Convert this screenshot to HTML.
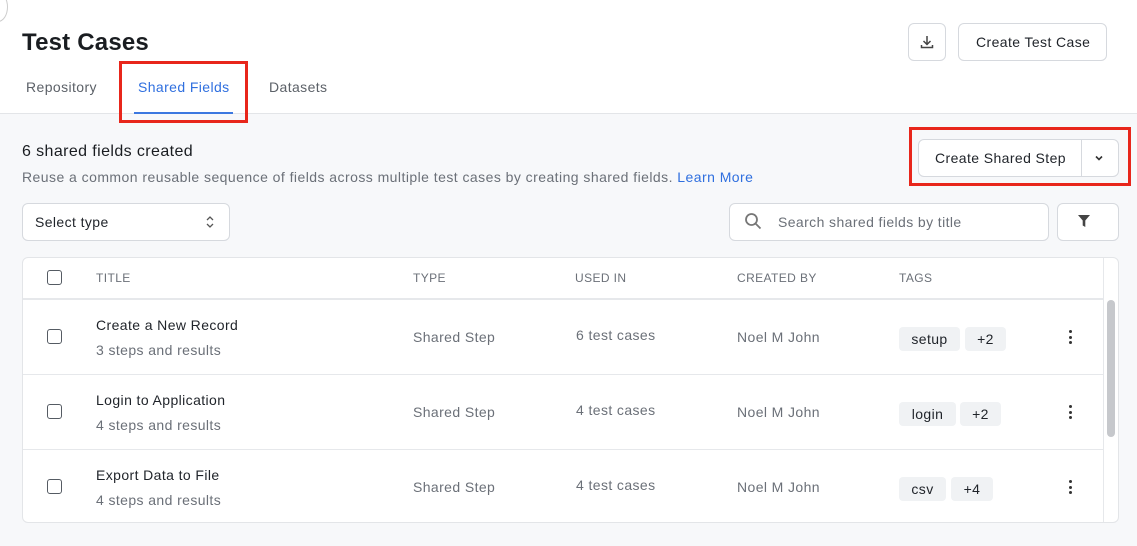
<!DOCTYPE html>
<html><head><meta charset="utf-8"><style>
*{box-sizing:border-box;margin:0;padding:0}
body{width:1137px;height:546px;overflow:hidden;font-family:"Liberation Sans",sans-serif;background:#f7f8fa;position:relative;color:#1f2329;letter-spacing:0.4px}
.a{position:absolute;white-space:nowrap}
.top{position:absolute;left:0;top:0;width:1137px;height:114px;background:#fff;border-bottom:1px solid #e3e5e8}
.btn{position:absolute;background:#fff;border:1px solid #d6d9de;border-radius:6px}
.red{position:absolute;border:3px solid #e8261b}
.cb{position:absolute;width:15px;height:15px;border:1.5px solid #555b63;border-radius:3px;background:#fff}
.h{font-size:12px;color:#6b7078;top:271px}
.t1{font-size:14px;color:#1f2329}
.t2{font-size:14px;color:#6b7078}
.g{font-size:14px;color:#6b7078}
.tag{position:absolute;background:#f0f2f4;border-radius:4px;height:24px;font-size:14px;color:#1f2329;line-height:24px;text-align:center}
.dots{position:absolute;width:3px}
.dots i{display:block;width:3px;height:3px;background:#333;border-radius:50%;margin-bottom:2.5px}
.row{position:absolute;left:23px;width:1080px;height:1px;background:#e6e8eb}
</style></head><body>
<div class="top"></div>
<div class="a" style="left:-12px;top:-8px;width:20px;height:30px;border:1px solid #ccc;border-radius:50%;background:#fff"></div>
<div class="a" style="left:22px;top:29px;font-size:24px;font-weight:bold;color:#1a1d21;letter-spacing:0.2px">Test Cases</div>
<div class="a" style="left:26px;top:79px;font-size:14px;color:#5c6168">Repository</div>
<div class="a" style="left:138px;top:79px;font-size:14px;color:#2f6fdf">Shared Fields</div>
<div class="a" style="left:134px;top:112px;width:99px;height:2px;background:#3c78e0"></div>
<div class="a" style="left:269px;top:79px;font-size:14px;color:#5c6168">Datasets</div>
<div class="red" style="left:119px;top:61px;width:129px;height:62px"></div>
<div class="btn" style="left:908px;top:23px;width:38px;height:38px"></div>
<svg class="a" style="left:919px;top:34px" width="16" height="16" viewBox="0 0 16 16" fill="none" stroke="#444" stroke-width="1.5"><path d="M8 2v8M4.5 7l3.5 3.5L11.5 7M2.5 11v2.5h11V11"/></svg>
<div class="btn" style="left:958px;top:23px;width:149px;height:38px"></div>
<div class="a" style="left:976px;top:34px;font-size:14px;color:#1f2329">Create Test Case</div>
<div class="a" style="left:22px;top:143px;font-size:16px;color:#1a1d21">6 shared fields created</div>
<div class="a" style="left:22px;top:169px;font-size:14px;color:#6b7078;letter-spacing:0.45px">Reuse a common reusable sequence of fields across multiple test cases by creating shared fields. <span style="color:#2f6fdf">Learn More</span></div>
<div class="btn" style="left:918px;top:139px;width:201px;height:38px"></div>
<div class="a" style="left:1081px;top:140px;width:1px;height:36px;background:#d6d9de"></div>
<div class="a" style="left:935px;top:150px;font-size:14px;color:#1f2329">Create Shared Step</div>
<svg class="a" style="left:1093px;top:152px" width="12" height="12" viewBox="0 0 12 12" fill="none" stroke="#333" stroke-width="1.6"><path d="M3 4.5l3 3 3-3"/></svg>
<div class="red" style="left:909px;top:127px;width:222px;height:59px"></div>
<div class="btn" style="left:22px;top:203px;width:208px;height:38px"></div>
<div class="a" style="left:35px;top:214px;font-size:14px;color:#1f2329">Select type</div>
<svg class="a" style="left:205px;top:213px" width="10" height="18" viewBox="0 0 10 18" fill="none" stroke="#555" stroke-width="1.3"><path d="M2 7l3-3 3 3M2 11l3 3 3-3"/></svg>
<div class="btn" style="left:729px;top:203px;width:320px;height:38px"></div>
<svg class="a" style="left:744px;top:212px" width="18" height="18" viewBox="0 0 18 18" fill="none" stroke="#777" stroke-width="1.8"><circle cx="7.5" cy="7.5" r="5.5"/><path d="M11.5 11.5l5 5"/></svg>
<div class="a" style="left:778px;top:214px;font-size:14px;color:#6b7078">Search shared fields by title</div>
<div class="btn" style="left:1057px;top:203px;width:62px;height:38px"></div>
<svg class="a" style="left:1077px;top:214px" width="14" height="14" viewBox="0 0 14 14"><path d="M1 1h12L8.3 6.5V13L5.7 11.5V6.5z" fill="#444"/></svg>
<div class="a" style="left:22px;top:257px;width:1097px;height:266px;background:#fff;border:1px solid #e3e5e8;border-radius:6px"></div>
<div class="a" style="left:1103px;top:258px;width:1px;height:264px;background:#e6e8eb"></div>
<div class="a" style="left:1107px;top:300px;width:8px;height:137px;background:#c6c8cc;border-radius:4px"></div>
<div class="a" style="left:23px;top:298px;width:1080px;height:2px;background:#e6e8eb"></div>
<div class="row" style="top:374px"></div>
<div class="row" style="top:449px"></div>
<div class="cb" style="left:47px;top:270px"></div>
<div class="a h" style="left:96px">TITLE</div>
<div class="a h" style="left:413px">TYPE</div>
<div class="a h" style="left:575px">USED IN</div>
<div class="a h" style="left:737px">CREATED BY</div>
<div class="a h" style="left:899px">TAGS</div>

<div class="cb" style="left:47px;top:329px"></div>
<div class="a t1" style="left:96px;top:317px">Create a New Record</div>
<div class="a t2" style="left:96px;top:342px">3 steps and results</div>
<div class="a g" style="left:413px;top:329px">Shared Step</div>
<div class="a g" style="left:576px;top:327px">6 test cases</div>
<div class="a g" style="left:737px;top:329px">Noel M John</div>
<div class="tag" style="left:899px;top:327px;width:61px">setup</div>
<div class="tag" style="left:965px;top:327px;width:41px">+2</div>
<div class="dots" style="left:1069px;top:330px"><i></i><i></i><i></i></div>

<div class="cb" style="left:47px;top:404px"></div>
<div class="a t1" style="left:96px;top:392px">Login to Application</div>
<div class="a t2" style="left:96px;top:417px">4 steps and results</div>
<div class="a g" style="left:413px;top:404px">Shared Step</div>
<div class="a g" style="left:576px;top:402px">4 test cases</div>
<div class="a g" style="left:737px;top:404px">Noel M John</div>
<div class="tag" style="left:899px;top:402px;width:57px">login</div>
<div class="tag" style="left:960px;top:402px;width:41px">+2</div>
<div class="dots" style="left:1069px;top:405px"><i></i><i></i><i></i></div>

<div class="cb" style="left:47px;top:479px"></div>
<div class="a t1" style="left:96px;top:467px">Export Data to File</div>
<div class="a t2" style="left:96px;top:492px">4 steps and results</div>
<div class="a g" style="left:413px;top:479px">Shared Step</div>
<div class="a g" style="left:576px;top:477px">4 test cases</div>
<div class="a g" style="left:737px;top:479px">Noel M John</div>
<div class="tag" style="left:899px;top:477px;width:47px">csv</div>
<div class="tag" style="left:951px;top:477px;width:42px">+4</div>
<div class="dots" style="left:1069px;top:480px"><i></i><i></i><i></i></div>
</body></html>
